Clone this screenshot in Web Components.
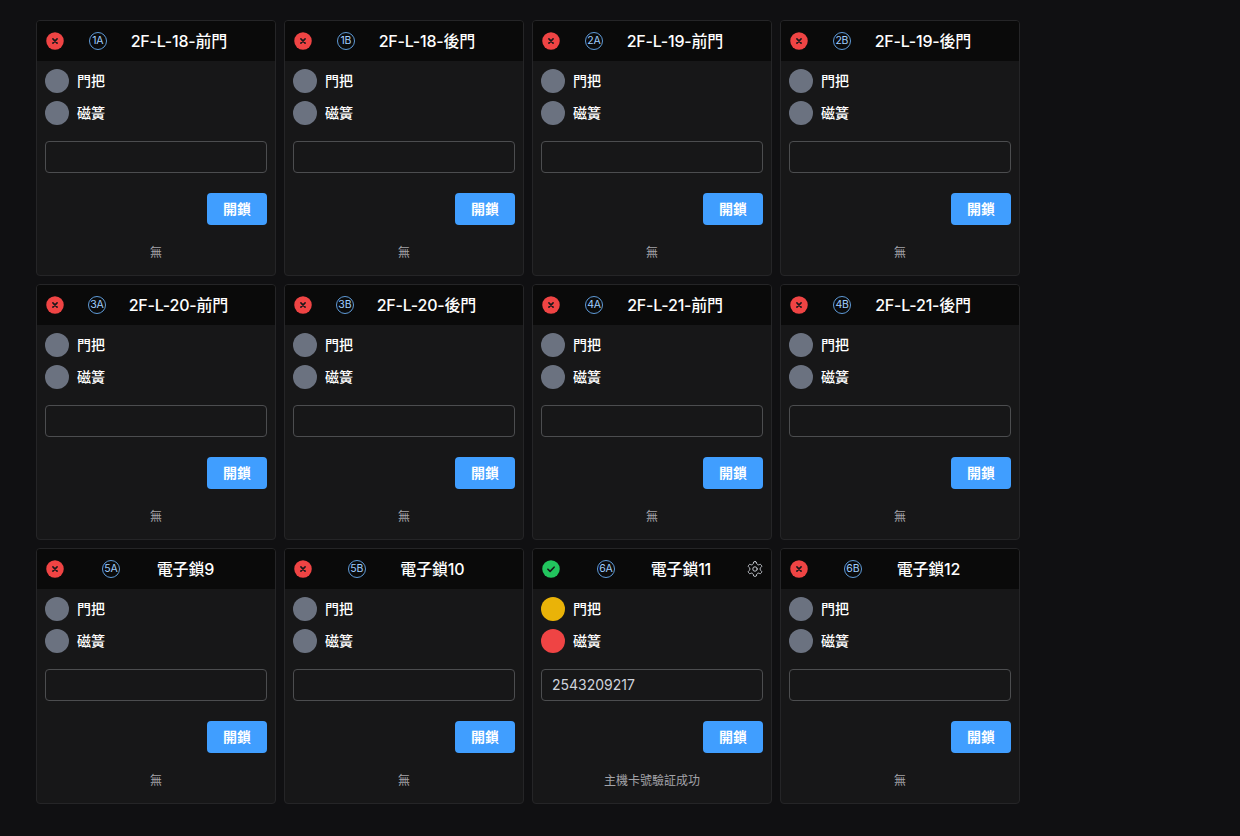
<!DOCTYPE html>
<html lang="zh-Hant">
<head>
<meta charset="utf-8">
<title>門鎖</title>
<style>
	html, body { margin: 0; background: #101012; }
	body { font-family: Inter, "Noto Sans CJK TC", sans-serif; }
</style>
</head>
<body>

<template id="tpl-door-grid">
	<style>
		:host { display: grid; grid-template-columns: repeat(4, 240px); gap: 8px; padding: 20px 36px; }
	</style>
	<slot></slot>
</template>

<template id="tpl-door-card">
	<style>
		:host {
			display: flex; flex-direction: column; box-sizing: border-box; height: 256px;
			background: #171718; border: 1px solid #252527; border-radius: 4px; overflow: hidden; color: #fff;
		}
		header {
			display: flex; align-items: center; justify-content: space-between;
			height: 40px; padding: 0 8px; background: #0a0a0a; flex: none;
		}
		.state { width: 20px; height: 20px; display: block; }
		.gear { width: 16px; height: 16px; display: block; fill: none; stroke: #d8dce4; stroke-width: 1.2; stroke-linecap: round; stroke-linejoin: round; }
		.gear.off { visibility: hidden; }
		.title { font-size: 16px; font-weight: 500; line-height: 24px; white-space: nowrap; letter-spacing: -0.2px; }
		.body { display: flex; flex-direction: column; padding: 8px; flex: 1; }
		.rows { display: flex; flex-direction: column; gap: 8px; }
		input {
			display: block; box-sizing: border-box; width: 100%; height: 32px; margin-top: 16px; padding: 0 10px 2px;
			background: transparent; border: 1px solid #4c4d4f; border-radius: 4px; outline: none;
			color: #cfd3dc; font: 14px Inter, "Noto Sans CJK TC", sans-serif;
		}
		button {
			display: block; align-self: flex-end; width: 60px; height: 32px; margin-top: 20px; padding: 0 0 2px;
			background: #409eff; border: 0; border-radius: 4px;
			color: #fff; font: 600 14px Inter, "Noto Sans CJK TC", sans-serif;
		}
		.status { margin-top: 20px; text-align: center; font-size: 12px; line-height: 16px; color: #a3a3a8; }
	</style>
	<header>
		<svg class="state" viewBox="0 0 20 20"></svg>
		<door-tag></door-tag>
		<span class="title"><slot></slot></span>
		<svg class="gear" viewBox="1.2 1.2 21.6 21.6">
			<path d="M12.22 2h-.44a2 2 0 0 0-2 2v.18a2 2 0 0 1-1 1.73l-.43.25a2 2 0 0 1-2 0l-.15-.08a2 2 0 0 0-2.73.73l-.22.38a2 2 0 0 0 .73 2.73l.15.1a2 2 0 0 1 1 1.72v.51a2 2 0 0 1-1 1.74l-.15.09a2 2 0 0 0-.73 2.73l.22.38a2 2 0 0 0 2.73.73l.15-.08a2 2 0 0 1 2 0l.43.25a2 2 0 0 1 1 1.73V20a2 2 0 0 0 2 2h.44a2 2 0 0 0 2-2v-.18a2 2 0 0 1 1-1.73l.43-.25a2 2 0 0 1 2 0l.15.08a2 2 0 0 0 2.73-.73l.22-.39a2 2 0 0 0-.73-2.73l-.15-.08a2 2 0 0 1-1-1.74v-.5a2 2 0 0 1 1-1.74l.15-.09a2 2 0 0 0 .73-2.73l-.22-.38a2 2 0 0 0-2.73-.73l-.15.08a2 2 0 0 1-2 0l-.43-.25a2 2 0 0 1-1-1.73V4a2 2 0 0 0-2-2z"/>
			<circle cx="12" cy="12" r="3"/>
		</svg>
	</header>
	<div class="body">
		<div class="rows">
			<door-light label="門把"></door-light>
			<door-light label="磁簧"></door-light>
		</div>
		<input type="text">
		<button>開鎖</button>
		<div class="status"></div>
	</div>
</template>

<template id="tpl-door-tag">
	<style>
		:host {
			display: flex; align-items: center; justify-content: center; box-sizing: border-box;
			width: 18px; height: 18px; border: 1px solid #5f9bd8; border-radius: 50%;
			color: #a0cfff; font-size: 10.5px; line-height: 1; letter-spacing: -0.2px;
		}
	</style>
	<slot></slot>
</template>

<template id="tpl-door-light">
	<style>
		:host { display: flex; align-items: center; gap: 8px; height: 24px; }
		i { width: 24px; height: 24px; border-radius: 50%; background: var(--dot, #6b7280); }
		span { font-size: 14px; font-weight: 500; color: #fff; padding-bottom: 2px; }
	</style>
	<i></i><span></span>
</template>

<door-grid>
	<door-card tag="1A" status="無">2F-L-18-前門</door-card>
	<door-card tag="1B" status="無">2F-L-18-後門</door-card>
	<door-card tag="2A" status="無">2F-L-19-前門</door-card>
	<door-card tag="2B" status="無">2F-L-19-後門</door-card>
	<door-card tag="3A" status="無">2F-L-20-前門</door-card>
	<door-card tag="3B" status="無">2F-L-20-後門</door-card>
	<door-card tag="4A" status="無">2F-L-21-前門</door-card>
	<door-card tag="4B" status="無">2F-L-21-後門</door-card>
	<door-card tag="5A" status="無">電子鎖9</door-card>
	<door-card tag="5B" status="無">電子鎖10</door-card>
	<door-card tag="6A" status="主機卡號驗証成功" online card="2543209217" handle="#eab308" reed="#ef4444">電子鎖11</door-card>
	<door-card tag="6B" status="無">電子鎖12</door-card>
</door-grid>

<script>
'use strict';

function shadowFrom(el, id) {
	const root = el.attachShadow({mode: 'open'});
	root.appendChild(document.getElementById(id).content.cloneNode(true));
	return root;
}

const ICON_OFF = '<circle cx="10" cy="10" r="8.75" fill="#ef4444"/><path d="M7.9 7.9l4.2 4.2M12.1 7.9l-4.2 4.2" stroke="#18181a" stroke-width="1.6" stroke-linecap="round"/>';
const ICON_ON = '<circle cx="10" cy="10" r="8.75" fill="#22c55e"/><path d="M6.9 10.2l2.2 2.2 4-4.2" fill="none" stroke="#18181a" stroke-width="1.6" stroke-linecap="round" stroke-linejoin="round"/>';

class DoorGrid extends HTMLElement {
	constructor() {
		super();
		shadowFrom(this, 'tpl-door-grid');
	}
}

class DoorTag extends HTMLElement {
	constructor() {
		super();
		shadowFrom(this, 'tpl-door-tag');
	}
}

class DoorLight extends HTMLElement {
	constructor() {
		super();
		shadowFrom(this, 'tpl-door-light');
	}
	connectedCallback() {
		this.shadowRoot.querySelector('span').textContent = this.getAttribute('label');
	}
}

class DoorCard extends HTMLElement {
	constructor() {
		super();
		shadowFrom(this, 'tpl-door-card');
	}
	connectedCallback() {
		const root = this.shadowRoot;
		const online = this.hasAttribute('online');
		root.querySelector('.state').innerHTML = online ? ICON_ON : ICON_OFF;
		root.querySelector('.gear').classList.toggle('off', !online);
		root.querySelector('door-tag').textContent = this.getAttribute('tag');
		root.querySelector('.status').textContent = this.getAttribute('status');
		root.querySelector('input').setAttribute('value', this.getAttribute('card') || '');
		const lights = root.querySelectorAll('door-light');
		if (this.hasAttribute('handle')) lights[0].style.setProperty('--dot', this.getAttribute('handle'));
		if (this.hasAttribute('reed')) lights[1].style.setProperty('--dot', this.getAttribute('reed'));
	}
}

customElements.define('door-grid', DoorGrid);
customElements.define('door-tag', DoorTag);
customElements.define('door-light', DoorLight);
customElements.define('door-card', DoorCard);
</script>
</body>
</html>
